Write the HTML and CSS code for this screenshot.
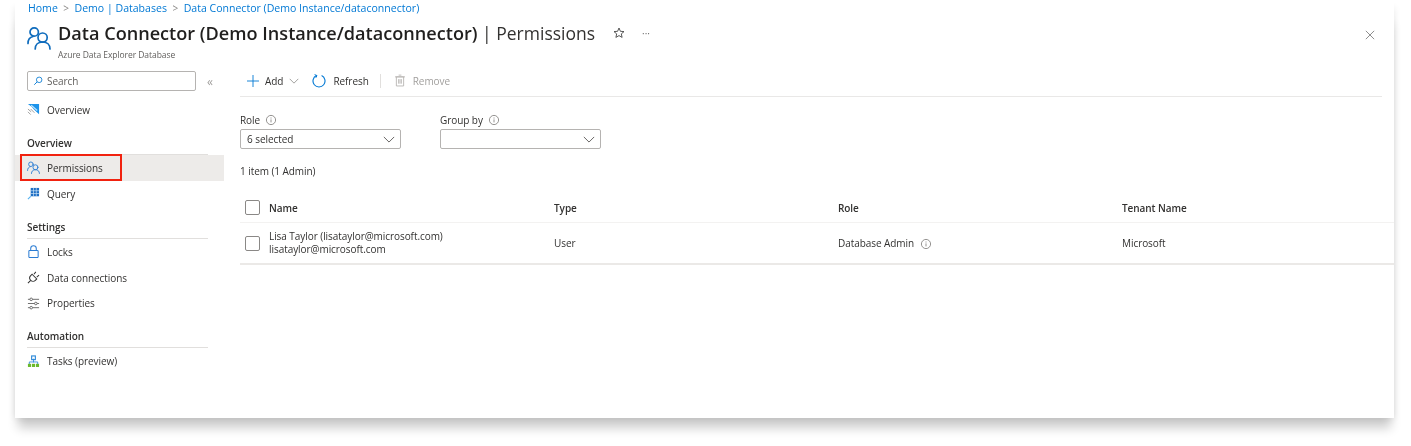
FILE: index.html
```html
<!DOCTYPE html>
<html lang="en">
  <head>
    <meta charset="UTF-8">
    <title>Data Connector | Permissions</title>
    <link rel="stylesheet" href="styles.css">
  </head>
  <body>
    <svg class="defs" width="0" height="0">
      <symbol id="people" viewBox="0 0 24 24">
        <g fill="none" stroke="currentColor" stroke-width="1.7" stroke-linecap="round">
          <circle cx="7.2" cy="6" r="4.2"/>
          <path d="M1 17.5c0-4 2-6.4 5-7"/>
          <circle cx="15.6" cy="11.6" r="4.6"/>
          <path d="M8.2 23c0-4.2 3-7 7.4-7s7.4 2.8 7.4 7"/>
        </g>
      </symbol>
      <symbol id="info" viewBox="0 0 12 12">
        <circle cx="6" cy="6" r="4.6" fill="none" stroke="#8a8886" stroke-width=".9"/>
        <path d="M6 5.4v3M6 3.5v1" stroke="#8a8886" stroke-width=".9"/>
      </symbol>
      <symbol id="chevron" viewBox="0 0 14 8">
        <path d="M1 1l6 6 6-6" fill="none" stroke="currentColor" stroke-width="1.1"/>
      </symbol>
    </svg>

    <div class="card">
      <nav class="crumbs">
        <a>Home</a><span class="sep">&gt;</span><a>Demo | Databases</a><span class="sep">&gt;</span><a>Data Connector (Demo Instance/dataconnector)</a>
      </nav>

      <header class="head">
        <svg class="head-icon"><use href="#people"/></svg>
        <div class="head-text">
          <div class="title-row">
            <h1><b>Data Connector (Demo Instance/dataconnector)</b> | Permissions</h1>
            <svg class="star" viewBox="0 0 12 12"><path d="M6 1l1.400 3.300 3.600.3-2.700 2.300.8 3.500L6 8.600l-3.100 1.800.8-3.500L1 4.600l3.600-.3z" fill="none" stroke="#444" stroke-width=".9"/></svg>
            <span class="dots">···</span>
          </div>
          <div class="subtitle">Azure Data Explorer Database</div>
        </div>
        <svg class="close" viewBox="0 0 12 12"><path d="M1 1l10 10M11 1L1 11" stroke="#777" stroke-width="1"/></svg>
      </header>

      <div class="body">
        <aside class="side">
          <div class="search-row">
            <div class="search">
              <svg viewBox="0 0 12 12"><circle cx="7.400" cy="4.600" r="3.300" fill="none" stroke="#0078d4" stroke-width="1"/><path d="M5 7L1.500 10.500" stroke="#0078d4" stroke-width="1.100"/></svg>
              <span>Search</span>
            </div>
            <span class="collapse">«</span>
          </div>

          <a class="item first">
            <svg viewBox="0 0 14 14"><path d="M1 1h12v11L7.500 7 5 4z" fill="#1b93eb"/><path d="M4.500 2.500l6.500 5.500" stroke="#bfe4fb" stroke-width="1.300"/><path d="M1 6.500l3.500 3M1 9.500l3 3M4 6.500l4 4" stroke="#9a9a9a" stroke-width="1"/></svg>
            Overview
          </a>

          <div class="group">Overview</div>
          <a class="item active">
            <svg class="blue"><use href="#people"/></svg>
            Permissions
            <span class="marker"></span>
          </a>
          <a class="item">
            <svg viewBox="0 0 14 14"><path d="M4 1h9v9H4z" fill="#1f6fc4"/><path d="M7 1v9M10 1v9M4 4h9M4 7h9" stroke="#cfe6f8" stroke-width=".7"/><path d="M1 13l3-3" stroke="#50b0f0" stroke-width="1.200"/></svg>
            Query
          </a>

          <div class="group">Settings</div>
          <a class="item">
            <svg viewBox="0 0 14 14"><rect x="2" y="6" width="10" height="7.500" rx=".8" fill="none" stroke="#2b7cd3" stroke-width="1.100"/><path d="M4 6V3.800a3 3 0 0 1 6 0V6" fill="none" stroke="#2b7cd3" stroke-width="1.100"/></svg>
            Locks
          </a>
          <a class="item">
            <svg viewBox="0 0 14 14"><g fill="none" stroke="#333" stroke-width="1.100"><path d="M5.500 3.500l5 5-1.500 1.500a3.500 3.500 0 0 1-5-5z"/><path d="M4 10l-3 3M9.500 1L7.500 3.500M13 4.500l-2.500 2"/></g></svg>
            Data connections
          </a>
          <a class="item">
            <svg viewBox="0 0 14 14"><g fill="none" stroke="#555" stroke-width=".9"><path d="M1 2.500h2M6 2.500h7M1 7h7M11 7h2M1 11.500h2M6 11.500h7"/><circle cx="4.500" cy="2.500" r="1.400"/><circle cx="9.500" cy="7" r="1.400"/><circle cx="4.500" cy="11.500" r="1.400"/></g></svg>
            Properties
          </a>

          <div class="group">Automation</div>
          <a class="item">
            <svg viewBox="0 0 14 14"><path d="M7 4v4M2.500 10V7.500h9V10" fill="none" stroke="#2b88d8" stroke-width=".9"/><rect x="5" y="1" width="4" height="4" fill="none" stroke="#2b88d8" stroke-width="1.200"/><rect x="1" y="9.500" width="3.400" height="3.400" fill="#6bb92c"/><rect x="5.300" y="9.500" width="3.400" height="3.400" fill="#6bb92c"/><rect x="9.600" y="9.500" width="3.400" height="3.400" fill="#6bb92c"/></svg>
            Tasks (preview)
          </a>
        </aside>

        <main class="main">
          <div class="toolbar">
            <button class="tool">
              <svg class="ic-add" viewBox="0 0 12 12"><path d="M6 0v12M0 6h12" stroke="#0078d4" stroke-width=".9"/></svg>
              Add
              <svg class="ic-chev"><use href="#chevron"/></svg>
            </button>
            <button class="tool">
              <svg class="ic-refresh" viewBox="0 0 14 14"><path d="M4.400 1.600a6 6 0 1 0 5.200 0" fill="none" stroke="#0078d4" stroke-width="1.100"/><path d="M2.600 .6l2.400 1-1.200 2.200" fill="none" stroke="#0078d4" stroke-width="1"/></svg>
              Refresh
            </button>
            <span class="tool-sep"></span>
            <button class="tool off">
              <svg class="ic-trash" viewBox="0 0 11 13"><path d="M1.500 2.500h8v10h-8zM0 2.500h11M4 .6h3M4 5v5M5.500 5v5M7 5v5" fill="none" stroke="#b0aeac" stroke-width=".9"/></svg>
              Remove
            </button>
          </div>

          <div class="filters">
            <div class="filter">
              <label>Role <svg class="info"><use href="#info"/></svg></label>
              <div class="select"><span>6 selected</span><svg><use href="#chevron"/></svg></div>
            </div>
            <div class="filter">
              <label>Group by <svg class="info"><use href="#info"/></svg></label>
              <div class="select"><span></span><svg><use href="#chevron"/></svg></div>
            </div>
          </div>

          <div class="count">1 item (1 Admin)</div>

          <div class="table">
            <div class="tr th">
              <span class="check"></span>
              <span>Name</span>
              <span>Type</span>
              <span>Role</span>
              <span>Tenant Name</span>
            </div>
            <div class="tr td">
              <span class="check"></span>
              <span>Lisa Taylor (lisataylor@microsoft.com)<br>lisataylor@microsoft.com</span>
              <span>User</span>
              <span>Database Admin <svg class="info cell-info"><use href="#info"/></svg></span>
              <span>Microsoft</span>
            </div>
          </div>
        </main>
      </div>
    </div>
  </body>
</html>
```

FILE: styles.css
```css
* { box-sizing: border-box; }
html, body { margin: 0; height: 100%; background: #fff; overflow: hidden; }
body { font-family: "Open Sans", "Noto Sans", sans-serif; font-size: 10px; letter-spacing: -0.06px; color: #323130; padding: 8px 17px 28px 15px; }
.defs { position: absolute; }
svg { display: block; flex: none; }

/* the reference is a soft, upscaled capture */
.card { display: flow-root; height: 410px; background: #fff; box-shadow: 0 13px 10px -3px rgba(0, 0, 0, 0.2), 0 0 7px rgba(0, 0, 0, 0.1); }
.crumbs, .head, .body { filter: blur(0.35px); }

.crumbs { margin-top: -8px; height: 16px; padding-left: 13px; display: flex; align-items: center; color: #0078d4; font-size: 10.55px; letter-spacing: 0; background: #fff; }
.crumbs .sep { color: #8a8886; margin: 0 5.5px; font-size: 10px; }

.head { display: flex; height: 39px; margin-top: 7px; padding: 0 19px 0 12px; }
.head-icon { width: 24px; height: 24px; margin-top: 3px; color: #0f6cbd; }
.head-text { flex: 1; margin-left: 7px; }
.title-row { display: flex; align-items: center; height: 22px; margin-top: -1px; }
h1 { margin: 0; font-size: 17.5px; font-weight: 400; letter-spacing: 0; white-space: nowrap; color: #323130; }
h1 b { font-size: 18.13px; font-weight: 600; color: #201f1e; }
.star { width: 12px; height: 12px; margin-left: 18px; }
.dots { margin-left: 17px; color: #777; font-size: 10px; }
.subtitle { font-size: 8.5px; color: #605e5c; margin-top: 5px; }
.close { width: 10px; height: 10px; margin-top: 7px; }

.body { display: grid; grid-template-columns: 209px 1fr; margin-top: 9px; }

.side { position: relative; }
.search-row { display: flex; align-items: center; padding-left: 12px; height: 20px; }
.search { width: 169px; height: 20px; border: 1px solid #b5b3b1; border-radius: 2px; display: flex; align-items: center; padding-left: 5px; gap: 4px; color: #605e5c; }
.search svg { width: 10px; height: 10px; }
.collapse { margin-left: 11px; color: #a19f9d; font-size: 12px; }

.item { position: relative; display: flex; align-items: center; height: 25.9px; padding-left: 12px; gap: 7px; color: #323130; }
.item svg { width: 13px; height: 13px; }
.item svg.blue { color: #2b7cd3; }
.item.first { margin-top: 6px; }
.item.active { background: #edebe9; }
.marker { position: absolute; left: 5px; top: -1px; width: 102px; height: 27px; border: 2px solid #f1220f; }

.group { margin: 12px 16px 0 12px; height: 20px; font-weight: 600; color: #323130; border-bottom: 1px solid #e1dfdd; line-height: 16px; }

.main { padding-left: 16px; }
.toolbar { display: flex; align-items: center; margin-right: 12px; padding-left: 7px; padding-bottom: 4px; height: 28px; border-bottom: 1px solid #e9e8e7; margin-top: -2px; }
.tool { display: flex; align-items: center; border: 0; background: none; padding: 0; font: inherit; letter-spacing: inherit; color: #323130; }
.tool.off { color: #a19f9d; }
.ic-add { width: 12px; height: 12px; margin-right: 6px; }
.ic-chev { width: 10px; height: 6px; margin-left: 6px; margin-right: 13px; color: #8a8886; }
.ic-refresh { width: 14px; height: 14px; margin-right: 7px; }
.tool-sep { width: 1px; height: 14px; background: #e1dfdd; margin: 0 14px 0 11px; }
.ic-trash { width: 10px; height: 13px; margin-right: 8px; }

.filters { display: flex; gap: 39px; margin-top: 15px; }
.filter { width: 161px; }
.filter label { display: flex; align-items: center; gap: 5px; height: 15px; color: #323130; }
.info { width: 12px; height: 12px; }
.select { margin-top: 2px; height: 20px; border: 1px solid #b5b3b1; border-radius: 2px; display: flex; align-items: center; justify-content: space-between; padding: 0 5px 0 6px; color: #323130; }
.select svg { width: 12px; height: 7px; color: #605e5c; }

.count { margin-top: 15px; height: 14px; }

.table { margin-top: 15px; }
.tr { display: grid; grid-template-columns: 29px 285px 284px 284px 272px; align-items: center; border-bottom: 1px solid #edebe9; }
.th { height: 30px; font-weight: 600; border-bottom-color: #f3f2f1; }
.td { height: 42px; line-height: 13px; border-bottom-width: 2px; border-bottom-color: #ebe9e7; }
.check { width: 15px; height: 15px; margin-left: 5px; border: 1px solid #8a8886; border-radius: 2px; }
.cell-info { display: inline-block; vertical-align: -3px; margin-left: 3px; }
```
